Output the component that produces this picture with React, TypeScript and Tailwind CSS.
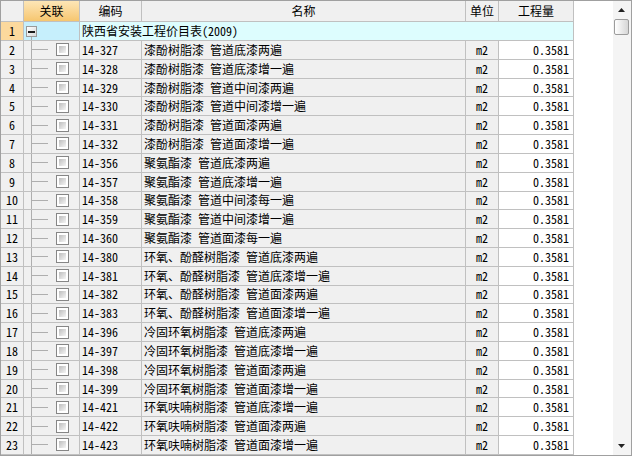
import React from 'react';

const rows: [string, string][] = [
  ['14-327', '漆酚树脂漆 管道底漆两遍'],
  ['14-328', '漆酚树脂漆 管道底漆增一遍'],
  ['14-329', '漆酚树脂漆 管道中间漆两遍'],
  ['14-330', '漆酚树脂漆 管道中间漆增一遍'],
  ['14-331', '漆酚树脂漆 管道面漆两遍'],
  ['14-332', '漆酚树脂漆 管道面漆增一遍'],
  ['14-356', '聚氨酯漆 管道底漆两遍'],
  ['14-357', '聚氨酯漆 管道底漆增一遍'],
  ['14-358', '聚氨酯漆 管道中间漆每一遍'],
  ['14-359', '聚氨酯漆 管道中间漆增一遍'],
  ['14-360', '聚氨酯漆 管道面漆每一遍'],
  ['14-380', '环氧、酚醛树脂漆 管道底漆两遍'],
  ['14-381', '环氧、酚醛树脂漆 管道底漆增一遍'],
  ['14-382', '环氧、酚醛树脂漆 管道面漆两遍'],
  ['14-383', '环氧、酚醛树脂漆 管道面漆增一遍'],
  ['14-396', '冷固环氧树脂漆 管道底漆两遍'],
  ['14-397', '冷固环氧树脂漆 管道底漆增一遍'],
  ['14-398', '冷固环氧树脂漆 管道面漆两遍'],
  ['14-399', '冷固环氧树脂漆 管道面漆增一遍'],
  ['14-421', '环氧呋喃树脂漆 管道底漆增一遍'],
  ['14-422', '环氧呋喃树脂漆 管道面漆两遍'],
  ['14-423', '环氧呋喃树脂漆 管道面漆增一遍'],
];

const cell = 'shrink-0 border-r border-b border-[#c0c0c0] flex items-center';

const Checkbox: React.FC = () => (
  <div className="w-[13px] h-[13px] shrink-0 border border-[#868686] bg-white p-[2px]">
    <div className="w-full h-full bg-gradient-to-br from-[#bdbdbd] to-[#f6f6f6]" />
  </div>
);

const Row: React.FC<{ n: number; code: string; name: string }> = ({ n, code, name }) => (
  <div className="flex h-[19px]">
    <div className={`${cell} w-[23px] justify-center bg-[#f0f0f0]`}>{n}</div>
    <div className={`${cell} w-[56px] pl-[7px] bg-[#f0f0f0]`}>
      <div className="w-px h-full bg-[#aeaeae]" />
      <div className="w-[16px] h-px bg-[#aeaeae]" />
      <div className="ml-[8px]">
        <Checkbox />
      </div>
    </div>
    <div className={`${cell} w-[62px] pl-[2px] bg-[#f0f0f0]`}>{code}</div>
    <div className={`${cell} w-[324px] pl-[2px] bg-[#f0f0f0] whitespace-pre`}>{name}</div>
    <div className={`${cell} w-[33px] justify-center bg-[#f0f0f0]`}>m2</div>
    <div className={`${cell} w-[75px] justify-end pr-[4px] bg-white`}>0.3581</div>
  </div>
);

const Arrow: React.FC<{ down?: boolean }> = ({ down }) => (
  <svg width="7" height="4" viewBox="0 0 7 4">
    {down ? <polygon points="0,0 7,0 3.5,4" fill="#222" /> : <polygon points="3.5,0 7,4 0,4" fill="#222" />}
  </svg>
);

const App: React.FC = () => {
  return (
    <div className="w-[632px] h-[458px] bg-white text-[12px] leading-none text-black font-['Noto_Sans_Mono_CJK_SC','Noto_Sans_CJK_SC','Liberation_Sans',sans-serif]">
      <div className="w-[632px] h-[456px] border border-[#a0a0a0] flex overflow-hidden">
        <div className="flex-1 flex flex-col overflow-hidden">
          <div className="flex h-[21px] shrink-0">
            <div className={`${cell} w-[23px] bg-[#f0f0f0]`} />
            <div className={`${cell} w-[56px] justify-center bg-gradient-to-b from-[#fde6b6] to-[#f6c66f]`}>关联</div>
            <div className={`${cell} w-[62px] justify-center bg-[#f0f0f0]`}>编码</div>
            <div className={`${cell} w-[324px] justify-center bg-[#f0f0f0]`}>名称</div>
            <div className={`${cell} w-[33px] justify-center bg-[#f0f0f0]`}>单位</div>
            <div className={`${cell} w-[75px] justify-center bg-[#f0f0f0]`}>工程量</div>
          </div>
          <div className="flex h-[19px] shrink-0">
            <div className={`${cell} w-[23px] justify-center bg-[#fcd99d]`}>1</div>
            <div className="shrink-0 w-[56px] border-r border-b border-[#c0c0c0] bg-[#c6effc] flex flex-col pl-[2px] pt-[4px]">
              <div className="w-[11px] h-[11px] border border-[#9a9a9a] bg-gradient-to-br from-white to-[#d8d8d8] flex items-center justify-center">
                <div className="w-[7px] h-[2px] bg-[#1a1a1a]" />
              </div>
              <div className="ml-[5px] w-px flex-1 bg-[#aeaeae]" />
            </div>
            <div className={`${cell} w-[494px] pl-[2px] bg-[#ddfdfe]`}>陕西省安装工程价目表(2009)</div>
          </div>
          {rows.map(([code, name], i) => (
            <Row key={code} n={i + 2} code={code} name={name} />
          ))}
        </div>
        <div className="w-[18px] shrink-0 bg-[#f4f4f4] flex flex-col">
          <div className="h-[18px] flex items-center justify-center pr-[1px]">
            <Arrow />
          </div>
          <div className="ml-[1px] w-[15px] h-[16px] rounded-[2px] border border-[#9c9c9c] bg-gradient-to-r from-white to-[#d6d6d6]" />
          <div className="flex-1" />
          <div className="h-[18px] flex items-center justify-center pr-[1px]">
            <Arrow down />
          </div>
        </div>
      </div>
    </div>
  );
};

export default App;
